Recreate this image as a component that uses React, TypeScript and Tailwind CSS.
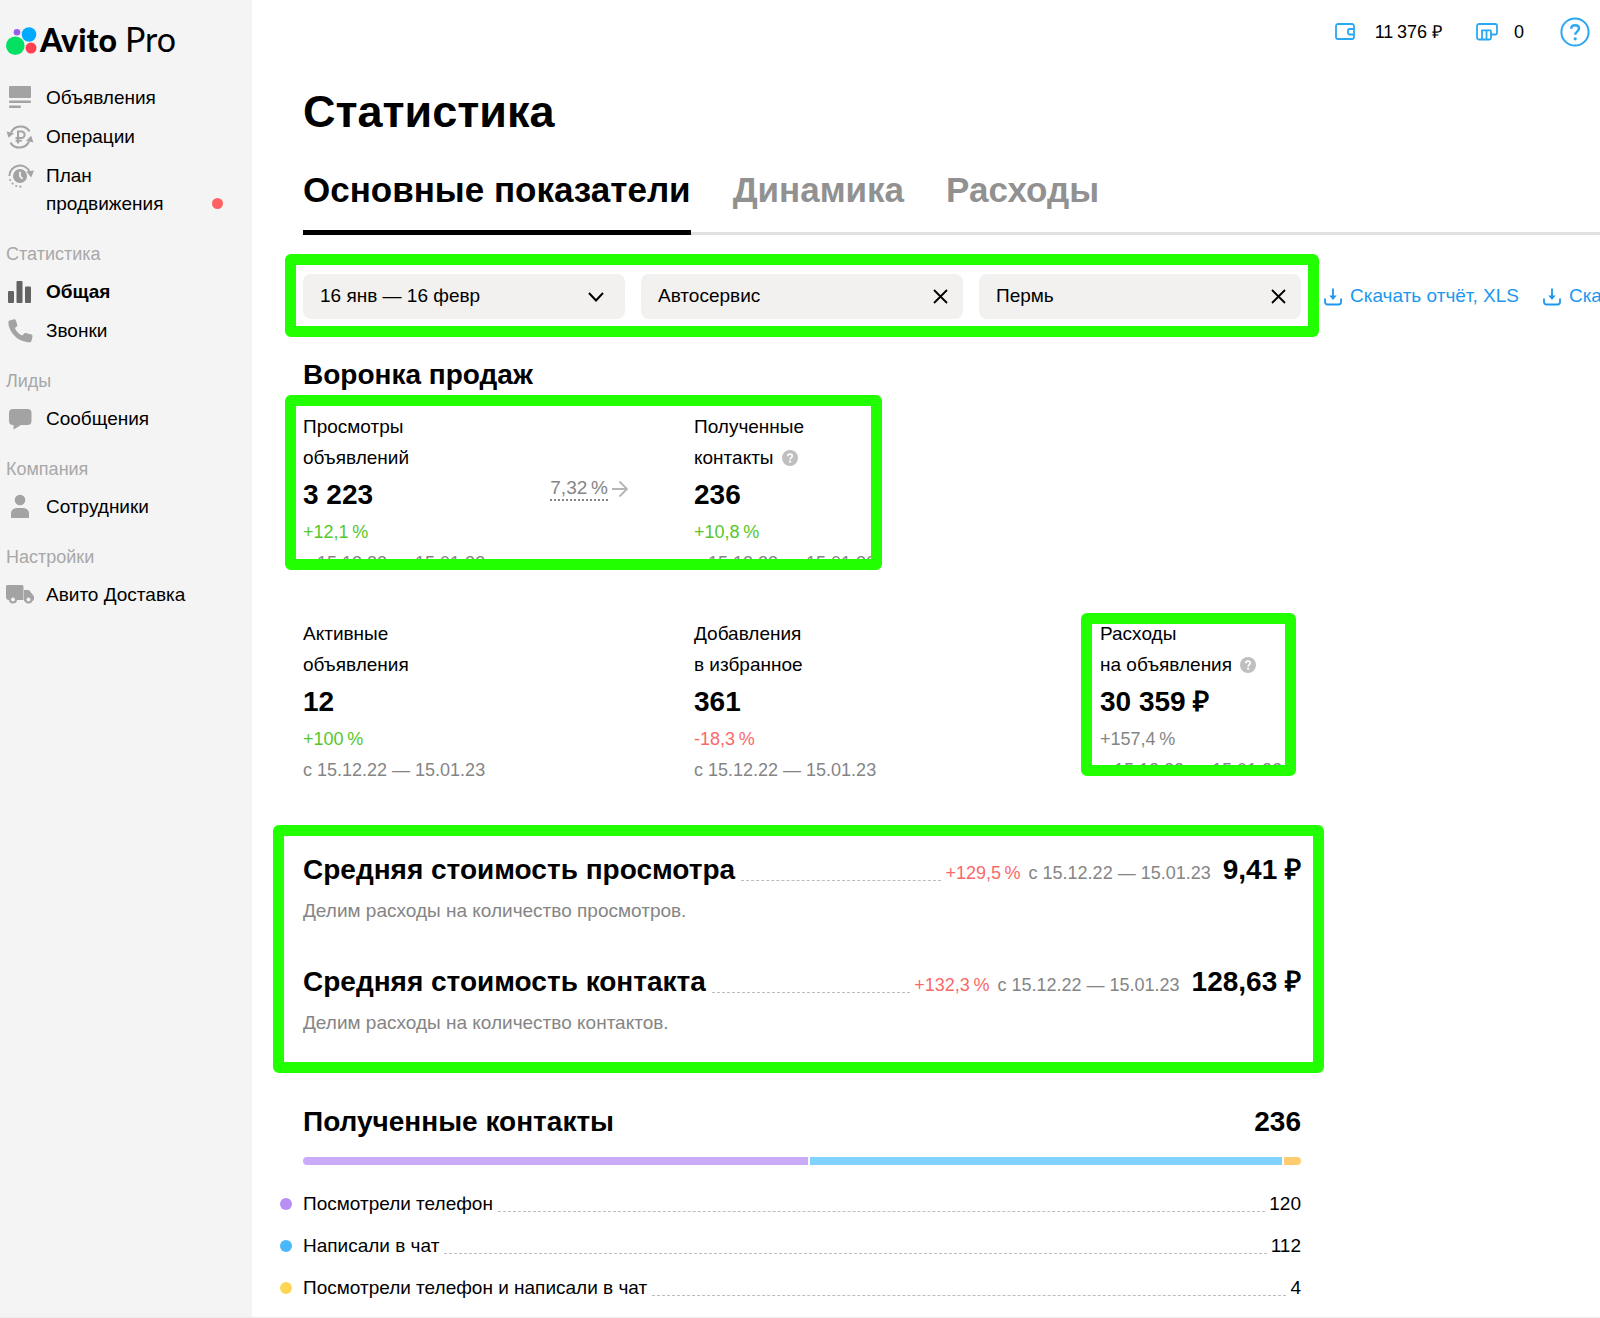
import React from "react";

type IconProps = { className?: string };

const AdsIcon = () => (
  <svg width="28" height="28" viewBox="0 0 28 28" fill="#a3a3a3" aria-hidden="true">
    <rect x="3" y="2" width="22" height="12" rx="1" />
    <rect x="3" y="16.5" width="22" height="2.4" rx="1" />
    <rect x="3" y="21.5" width="12" height="2.4" rx="1" />
  </svg>
);

const OperationsIcon = () => (
  <svg width="28" height="28" viewBox="0 0 28 28" fill="none" stroke="#a3a3a3" strokeWidth="2" aria-hidden="true">
    <path d="M5 9.5A10.6 10.6 0 0 1 23.6 8.4" />
    <path d="M23 18.5A10.6 10.6 0 0 1 4.4 19.6" />
    <path d="M.6 8.6 8 10.2 2.6 14.8Z" fill="#a3a3a3" stroke="none" />
    <path d="M27.4 19.4 20 17.8l5.2-5Z" fill="#a3a3a3" stroke="none" />
    <path d="M12 20.5V8.4h3.4a3.2 3.2 0 0 1 0 6.5H9.6M9.6 17.8h6.2" />
  </svg>
);

const PlanIcon = () => (
  <svg width="28" height="28" viewBox="0 0 28 28" fill="none" aria-hidden="true">
    <circle cx="14" cy="14" r="7" fill="#a3a3a3" />
    <path d="M14 9.8v4.6l2.6 2.4" stroke="#f4f4f4" strokeWidth="1.8" />
    <path d="M3.4 14A10.6 10.6 0 0 1 24 10.6" stroke="#a3a3a3" strokeWidth="2" />
    <path d="M20.4 9.6 28 8.4l-2.8 7Z" fill="#a3a3a3" />
    <g fill="#a3a3a3">
      <circle cx="4.2" cy="18" r="1.1" />
      <circle cx="6.6" cy="21.6" r="1.1" />
      <circle cx="10.2" cy="24" r="1.1" />
      <circle cx="14.4" cy="24.7" r="1.1" />
    </g>
  </svg>
);

const StatsIcon = () => (
  <svg width="28" height="28" viewBox="0 0 28 28" fill="#636363" aria-hidden="true">
    <rect x="2" y="13" width="6" height="12" rx="1" />
    <rect x="10.5" y="3" width="6" height="22" rx="1" />
    <rect x="19" y="8.5" width="6" height="16.5" rx="1" />
  </svg>
);

const CallsIcon = () => (
  <svg width="28" height="28" viewBox="0 0 28 28" fill="#a3a3a3" aria-hidden="true">
    <path d="M3.6 3.4 8 2.2c.8-.2 1.5.2 1.8 1l1.5 4.6c.2.7 0 1.3-.6 1.7L8.9 11c1.4 3.4 4 6 7.4 7.6l1.8-2c.4-.5 1-.7 1.7-.5l5.6 1.5c.8.2 1.3 1 1.1 1.8l-1.1 4.600c-.2.8-.8 1.3-1.6 1.3C12.5 25.3 2.400 15.5 2.4 5c0-.8.4-1.4 1.2-1.6Z" />
  </svg>
);

const MessagesIcon = () => (
  <svg width="28" height="28" viewBox="0 0 28 28" fill="#a3a3a3" aria-hidden="true">
    <path d="M7 4h14.5a4 4 0 0 1 4 4v8a4 4 0 0 1-4 4H15l-7.5 4.5V20H7a4 4 0 0 1-4-4V8a4 4 0 0 1 4-4Z" />
  </svg>
);

const StaffIcon = () => (
  <svg width="28" height="28" viewBox="0 0 28 28" fill="#a3a3a3" aria-hidden="true">
    <circle cx="14" cy="7" r="5.3" />
    <path d="M5 25v-4.5a5.5 5.5 0 0 1 5.5-5.5h7a5.5 5.5 0 0 1 5.5 5.5V25Z" />
  </svg>
);

const DeliveryIcon = () => (
  <svg width="28" height="28" viewBox="0 0 28 28" fill="#a3a3a3" aria-hidden="true">
    <path d="M1.5 4H16a1.5 1.5 0 0 1 1.5 1.5V19H3a3 3 0 0 1-3-3V5.5A1.5 1.5 0 0 1 1.5 4Z" />
    <path d="M18 9h3.5a3 3 0 0 1 2.5 1.3l3.4 4.2c.4.5.6 1 .6 1.7V18a2 2 0 0 1-2 2h-8Z" />
    <circle cx="7" cy="18.5" r="4" />
    <circle cx="22.5" cy="18.5" r="4" />
    <circle cx="7" cy="18.5" r="2" fill="#f4f4f4" />
    <circle cx="22.5" cy="18.5" r="2" fill="#f4f4f4" />
  </svg>
);

const WalletIcon = () => (
  <svg width="20" height="18" viewBox="0 0 20 18" fill="none" stroke="#2ba8f3" strokeWidth="1.8" aria-hidden="true">
    <path d="M19 6V3a2 2 0 0 0-2-2H3a2 2 0 0 0-2 2v11a2 2 0 0 0 2 2h14a2 2 0 0 0 2-2v-2.5" />
    <path d="M19 6h-4.500a1.500 1.500 0 0 0-1.500 1.500v2.500a1.500 1.500 0 0 0 1.500 1.500H19Z" />
  </svg>
);

const ServicesIcon = () => (
  <svg width="22" height="18" viewBox="0 0 22 18" fill="none" stroke="#2ba8f3" strokeWidth="1.8" aria-hidden="true">
    <path d="M3 1h16a2 2 0 0 1 2 2v7a1.5 1.5 0 0 1-1.5 1.5H15V15a1.500 1.500 0 0 1-1.500 1.500H3A2 2 0 0 1 1 14.500V3a2 2 0 0 1 2-2Z" />
    <path d="M6 16.500V7M10.500 16.500V7.500M15 11.500V7.500M5.500 7.300H15" />
  </svg>
);

const HelpIcon = () => (
  <svg width="30" height="30" viewBox="0 0 30 30" fill="none" stroke="#2ba8f3" aria-hidden="true">
    <circle cx="15" cy="15" r="13.6" strokeWidth="2" />
    <path d="M11.200 11.800c0-2.200 1.600-3.600 3.900-3.600s3.900 1.400 3.900 3.400c0 2.700-3.700 2.800-3.700 6.200" strokeWidth="2.400" />
    <circle cx="15.200" cy="21.800" r="1.600" fill="#2ba8f3" stroke="none" />
  </svg>
);

const HintIcon = ({ className }: IconProps) => (
  <svg className={className} width="16" height="16" viewBox="0 0 16 16" fill="none" aria-hidden="true">
    <circle cx="8" cy="8" r="8" fill="#bfbfbf" />
    <path d="M5.700 6.300c0-1.400 1-2.200 2.300-2.200s2.300.8 2.300 2c0 1.600-2.200 1.600-2.200 3.500" stroke="#fff" strokeWidth="1.600" />
    <circle cx="8.100" cy="11.700" r="1.100" fill="#fff" />
  </svg>
);

const ChevronIcon = () => (
  <svg width="16" height="10" viewBox="0 0 16 10" fill="none" stroke="#000" strokeWidth="2" aria-hidden="true">
    <path d="m1 1 7 7.500L15 1" />
  </svg>
);

const CrossIcon = () => (
  <svg width="15" height="15" viewBox="0 0 15 15" fill="none" stroke="#000" strokeWidth="1.800" aria-hidden="true">
    <path d="m1 1 13 13M14 1 1 14" />
  </svg>
);

const DownloadIcon = () => (
  <svg width="18" height="18" viewBox="0 0 18 18" fill="none" stroke="#1b98ee" strokeWidth="1.800" aria-hidden="true">
    <path d="M1 10.500V14a2.500 2.500 0 0 0 2.500 2.500h11A2.500 2.500 0 0 0 17 14v-3.500" />
    <path d="M9 .5V10" />
    <path d="M5.300 7.500h7.400L9 12Z" fill="#1b98ee" stroke="none" />
  </svg>
);

const ArrowIcon = () => (
  <svg width="16" height="18" viewBox="0 0 16 18" fill="none" stroke="#b5b5b5" strokeWidth="1.800" aria-hidden="true">
    <path d="M0 9h14.500M7.500 1.500 15 9l-7.500 7.500" />
  </svg>
);

const Marker = ({ className }: IconProps) => (
  <div
    aria-hidden="true"
    className={`pointer-events-none absolute rounded-md border-[11px] border-[#22ff00] ${className ?? ""}`}
  />
);

type NavItem = { label: string; icon: React.ReactNode; active?: boolean; dot?: boolean };

const mainNav: NavItem[] = [
  { label: "Объявления", icon: <AdsIcon /> },
  { label: "Операции", icon: <OperationsIcon /> },
  { label: "План продвижения", icon: <PlanIcon />, dot: true },
];

const navGroups: { title: string; items: NavItem[] }[] = [
  {
    title: "Статистика",
    items: [
      { label: "Общая", icon: <StatsIcon />, active: true },
      { label: "Звонки", icon: <CallsIcon /> },
    ],
  },
  { title: "Лиды", items: [{ label: "Сообщения", icon: <MessagesIcon /> }] },
  { title: "Компания", items: [{ label: "Сотрудники", icon: <StaffIcon /> }] },
  { title: "Настройки", items: [{ label: "Авито Доставка", icon: <DeliveryIcon /> }] },
];

const NavLink = ({ item }: { item: NavItem }) => (
  <li>
    <a href="#" className="flex items-start gap-3 py-[5px] pl-[6px] leading-7">
      <span className="shrink-0">{item.icon}</span>
      <span className={item.active ? "w-[154px] font-bold" : "w-[154px]"}>{item.label}</span>
      {item.dot && <span className="mb-[9px] size-[11px] shrink-0 self-end rounded-full bg-[#ff6163]" />}
    </a>
  </li>
);

const Sidebar = () => (
  <aside className="w-[252px] shrink-0 bg-[#f4f4f4]">
    <a href="#" className="flex h-[79px] items-center gap-[2px] pt-1 pl-[6px] font-['Lato',sans-serif]">
      <svg width="32" height="30" viewBox="0 0 32 30" aria-hidden="true">
        <circle cx="9.300" cy="18.700" r="9.300" fill="#04e061" />
        <circle cx="23" cy="7.500" r="7.300" fill="#00aaff" />
        <circle cx="11" cy="5.300" r="3.300" fill="#965eeb" />
        <circle cx="25" cy="21" r="5.500" fill="#ff4053" />
      </svg>
      <span className="flex items-baseline gap-2 pb-1 leading-9">
        <span className="text-[32px] font-black">Avito</span>
        <span className="text-[34px]">Pro</span>
      </span>
    </a>
    <nav className="text-[19px]">
      <ul className="flex flex-col gap-px">
        {mainNav.map((item) => (
          <NavLink key={item.label} item={item} />
        ))}
      </ul>
      {navGroups.map((group) => (
        <section key={group.title} className="pt-3">
          <h2 className="pl-[6px] text-[18px] leading-[38px] text-[#a8a8a8]">{group.title}</h2>
          <ul className="flex flex-col gap-px">
            {group.items.map((item) => (
              <NavLink key={item.label} item={item} />
            ))}
          </ul>
        </section>
      ))}
    </nav>
  </aside>
);

type MetricProps = {
  label: [string, string];
  value: string;
  delta: string;
  deltaClass: string;
  hint?: boolean;
};

const Metric = ({ label, value, delta, deltaClass, hint }: MetricProps) => (
  <div className="leading-[31px]">
    <div>{label[0]}</div>
    <div className="flex items-center gap-2">
      {label[1]}
      {hint && (
        <button type="button" aria-label="Подсказка">
          <HintIcon />
        </button>
      )}
    </div>
    <div className="text-[28px] leading-[44px] font-bold">{value}</div>
    <div className={`text-[18px] leading-[31px] ${deltaClass}`}>{delta}</div>
    <div className="text-[18px] leading-[31px] whitespace-nowrap text-[#858585]">с 15.12.22 — 15.01.23</div>
  </div>
);

const Leader = () => <span className="mb-[7px] flex-1 self-end border-b border-dashed border-[#bdbdbd]" />;

type CostProps = { title: string; delta: string; value: string; note: string };

const Cost = ({ title, delta, value, note }: CostProps) => (
  <div>
    <div className="flex h-9 items-baseline leading-9">
      <h3 className="mr-[6px] text-[28px] leading-9 font-bold">{title}</h3>
      <Leader />
      <span className="ml-1 text-[18px] text-[#f76a6a]">{delta}</span>
      <span className="ml-2 text-[18px] text-[#858585]">с 15.12.22 — 15.01.23</span>
      <span className="ml-3 text-[28px] leading-9 font-bold">{value}</span>
    </div>
    <p className="mt-[7px] leading-[31px] text-[#858585]">{note}</p>
  </div>
);

const contacts = [
  { label: "Посмотрели телефон", count: 120, dot: "bg-[#b78ff5]", bar: "bg-[#caabfa]" },
  { label: "Написали в чат", count: 112, dot: "bg-[#47b9fb]", bar: "bg-[#82d2ff]" },
  { label: "Посмотрели телефон и написали в чат", count: 4, dot: "bg-[#ffd653]", bar: "bg-[#ffcd70]" },
];

const Topbar = () => (
  <header className="flex h-16 items-center justify-end pr-[10px]">
    <a href="#" className="mr-[34px] flex items-center gap-5">
      <WalletIcon />
      <span className="text-[18px]">11{"\u2009"}376 ₽</span>
    </a>
    <a href="#" className="mr-9 flex items-center gap-4">
      <ServicesIcon />
      <span className="text-[18px]">0</span>
    </a>
    <button type="button" aria-label="Помощь">
      <HelpIcon />
    </button>
  </header>
);

const Filter = ({ label, value }: { label: string; value: string }) => (
  <div className="flex h-[45px] min-w-0 items-center rounded-lg bg-[#f2f1f0] pr-[15px] pl-[17px]">
    <input aria-label={label} defaultValue={value} className="min-w-0 flex-1 bg-transparent outline-none" />
    <button type="button" aria-label="Очистить">
      <CrossIcon />
    </button>
  </div>
);

export default function App() {
  return (
    <div className="flex min-h-screen overflow-hidden border-b border-[#ececec] bg-white font-['Liberation_Sans',Arial,sans-serif] text-[19px] text-black">
      <Sidebar />
      <main className="min-w-0 flex-1 overflow-hidden pb-[14px]">
        <Topbar />
        <div className="pl-[51px]">
          <h1 className="mt-[22px] text-[45px] leading-[52px] font-bold">Статистика</h1>

          <div role="tablist" className="mt-[26px] flex h-[71px] gap-[42px] text-[35px] font-bold shadow-[inset_0_-3px_0_#e0e0e0]">
            <button role="tab" aria-selected="true" type="button" className="border-b-[5px] border-black pb-4">
              Основные показатели
            </button>
            <button role="tab" aria-selected="false" type="button" className="pb-[21px] text-[#919191]">
              Динамика
            </button>
            <button role="tab" aria-selected="false" type="button" className="pb-[21px] text-[#919191]">
              Расходы
            </button>
          </div>

          <div className="mt-[39px] flex items-center">
            <div className="relative grid w-full max-w-[998px] shrink-0 grid-cols-3 gap-4">
              <button
                type="button"
                aria-haspopup="dialog"
                className="flex h-[45px] min-w-0 items-center justify-between rounded-lg bg-[#f2f1f0] pr-[21px] pl-[17px]"
              >
                16 янв — 16 февр
                <ChevronIcon />
              </button>
              <Filter label="Категория" value="Автосервис" />
              <Filter label="Город" value="Пермь" />
              <Marker className="-inset-x-[18px] -top-5 -bottom-[18px]" />
            </div>
            <a href="#" className="ml-[23px] flex shrink-0 items-center gap-2 whitespace-nowrap text-[#1b98ee]">
              <DownloadIcon />
              Скачать отчёт, XLS
            </a>
            <a href="#" className="ml-6 flex shrink-0 items-center gap-2 whitespace-nowrap text-[#1b98ee]">
              <DownloadIcon />
              Скачать
            </a>
          </div>

          <div className="max-w-[998px]">
            <h2 className="mt-[38px] text-[28px] leading-9 font-bold">Воронка продаж</h2>
            <div className="relative mt-[18px] grid grid-cols-[391fr_406fr_201fr] gap-y-[39px]">
              <div className="flex items-center justify-between pr-[66px]">
                <Metric label={["Просмотры", "объявлений"]} value="3 223" delta={"+12,1\u2009%"} deltaClass="text-[#55c72b]" />
                <div className="flex items-center gap-1 pb-3 leading-[22px] text-[#858585]">
                  <span className="border-b-2 border-dotted border-[#858585]">7,32{"\u2009"}%</span>
                  <ArrowIcon />
                </div>
              </div>
              <Metric label={["Полученные", "контакты"]} value="236" delta={"+10,8\u2009%"} deltaClass="text-[#55c72b]" hint />
              <div />
              <Metric label={["Активные", "объявления"]} value="12" delta={"+100\u2009%"} deltaClass="text-[#55c72b]" />
              <Metric label={["Добавления", "в избранное"]} value="361" delta={"-18,3\u2009%"} deltaClass="text-[#f76a6a]" />
              <div className="relative">
                <Metric label={["Расходы", "на объявления"]} value="30 359 ₽" delta={"+157,4\u2009%"} deltaClass="text-[#858585]" hint />
                <Marker className="-top-[5px] right-[5px] bottom-[10px] -left-[19px]" />
              </div>
              <Marker className="-top-4 right-[419px] bottom-[216px] -left-[18px]" />
            </div>

            <div className="relative mt-[66px] flex flex-col gap-[38px]">
              <Cost
                title="Средняя стоимость просмотра"
                delta={"+129,5\u2009%"}
                value="9,41 ₽"
                note="Делим расходы на количество просмотров."
              />
              <Cost
                title="Средняя стоимость контакта"
                delta={"+132,3\u2009%"}
                value="128,63 ₽"
                note="Делим расходы на количество контактов."
              />
              <Marker className="-top-[27px] -right-[23px] -bottom-[35px] -left-[30px]" />
            </div>

            <div className="mt-[66px] flex justify-between text-[28px] leading-9 font-bold">
              <h2>Полученные контакты</h2>
              <span>236</span>
            </div>
            <div className="mt-[17px] flex h-2 gap-[2px] overflow-hidden rounded-full">
              {contacts.map((c) => (
                <div key={c.label} className={c.bar} style={{ flexGrow: c.count }} />
              ))}
            </div>
            <ul className="mt-[23px] -ml-[23px] flex flex-col gap-[11px] leading-[31px]">
              {contacts.map((c) => (
                <li key={c.label} className="flex items-center">
                  <span className={`mr-[11px] size-3 rounded-full ${c.dot}`} />
                  <span className="mr-[5px]">{c.label}</span>
                  <Leader />
                  <span className="ml-1">{c.count}</span>
                </li>
              ))}
            </ul>
          </div>
        </div>
      </main>
    </div>
  );
}
